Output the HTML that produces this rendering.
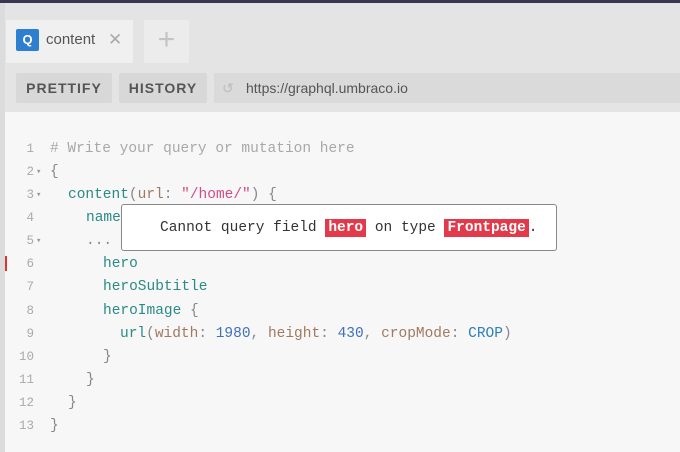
<!DOCTYPE html>
<html><head><style>
*{margin:0;padding:0;box-sizing:border-box}
body{width:680px;height:452px;overflow:hidden;background:#f7f7f7;font-family:"Liberation Sans",sans-serif;position:relative}
.top{position:absolute;left:0;top:0;width:680px;height:3px;background:#3a3550}
.hdr{position:absolute;left:0;top:3px;width:680px;height:109px;background:#e4e4e4}
.lb{position:absolute;left:0;top:3px;width:5px;height:449px;background:#dcdcdc}
.tab{position:absolute;left:6px;top:20px;width:127px;height:43px;background:#f0f0f0}
.q{position:absolute;left:16px;top:29px;width:23px;height:22px;background:#2f7fd0;border-radius:2px;color:#fff;font-weight:bold;font-size:13px;text-align:center;line-height:22px}
.tt{position:absolute;left:46px;top:31px;font-size:15px;color:#555}
.x{position:absolute;left:108px;top:30px;font-size:17px;color:#aaa}
.plus{position:absolute;left:144px;top:20px;width:45px;height:43px;background:#ececec;color:#c4c4c4;font-size:30px;text-align:center;line-height:40px;font-weight:300}
.btn{position:absolute;top:73px;height:30px;background:#d8d8d8;color:#555;font-weight:bold;font-size:14px;letter-spacing:1px;line-height:30px;text-align:center;border-radius:2px}
.url{position:absolute;left:214px;top:73px;width:466px;height:30px;background:#dadada;color:#555;font-size:14px;line-height:30px;padding-left:32px}
.code{position:absolute;left:0;top:138px;font-family:"Liberation Mono",monospace;font-size:14.5px}
.l{height:23.08px;line-height:23px;position:relative;white-space:pre}
.n{position:absolute;left:12px;width:22px;text-align:right;color:#aaa;font-size:12.5px}
.ar{position:absolute;left:36px;color:#999;font-size:9px}
.t{position:absolute;left:50px;color:#555}
.c{color:#a8a8a8}.f{color:#2a8a86}.a{color:#a07a60}.s{color:#d24d86}.num{color:#3f71b8}.e{color:#2f7fb8}.p{color:#888}
.err{position:absolute;left:5px;top:256px;width:2px;height:15px;background:#d33}
.tip{position:absolute;left:121px;top:204px;width:436px;height:47px;background:#fff;border:1px solid #888;border-radius:3px;font-family:"Liberation Mono",monospace;font-size:14.5px;color:#333;padding-left:38px;line-height:47px;white-space:pre}
.tip b{background:#e23a4a;color:#fff;padding:1px 3px}
</style></head><body>
<div class="top"></div><div class="hdr"></div><div class="lb"></div>
<div class="tab"></div><div class="q">Q</div><div class="tt">content</div><div class="x">✕</div>
<div class="plus">+</div>
<div class="btn" style="left:16px;width:96px">PRETTIFY</div>
<div class="btn" style="left:119px;width:88px">HISTORY</div>
<div class="url"><span style="position:absolute;left:8px;color:#bbb">↺</span>https://graphql.umbraco.io</div>
<div class="code">
<div class="l"><span class="n">1</span><span class="t c"># Write your query or mutation here</span></div>
<div class="l"><span class="n">2</span><span class="ar">▾</span><span class="t p">{</span></div>
<div class="l"><span class="n">3</span><span class="ar">▾</span><span class="t" style="left:68px"><span class="f">content</span><span class="p">(</span><span class="a">url</span><span class="p">: </span><span class="s">"/home/"</span><span class="p">) {</span></span></div>
<div class="l"><span class="n">4</span><span class="t f" style="left:86px">name</span></div>
<div class="l"><span class="n">5</span><span class="ar">▾</span><span class="t p" style="left:86px">...</span></div>
<div class="l"><span class="n">6</span><span class="t f" style="left:103px">hero</span></div>
<div class="l"><span class="n">7</span><span class="t f" style="left:103px">heroSubtitle</span></div>
<div class="l"><span class="n">8</span><span class="t" style="left:103px"><span class="f">heroImage</span><span class="p"> {</span></span></div>
<div class="l"><span class="n">9</span><span class="t" style="left:120px"><span class="f">url</span><span class="p">(</span><span class="a">width</span><span class="p">: </span><span class="num">1980</span><span class="p">, </span><span class="a">height</span><span class="p">: </span><span class="num">430</span><span class="p">, </span><span class="a">cropMode</span><span class="p">: </span><span class="e">CROP</span><span class="p">)</span></span></div>
<div class="l"><span class="n">10</span><span class="t p" style="left:103px">}</span></div>
<div class="l"><span class="n">11</span><span class="t p" style="left:86px">}</span></div>
<div class="l"><span class="n">12</span><span class="t p" style="left:68px">}</span></div>
<div class="l"><span class="n">13</span><span class="t p">}</span></div>
</div>
<div class="err"></div>
<div class="tip">Cannot query field <b>hero</b> on type <b>Frontpage</b>.</div>
</body></html>
